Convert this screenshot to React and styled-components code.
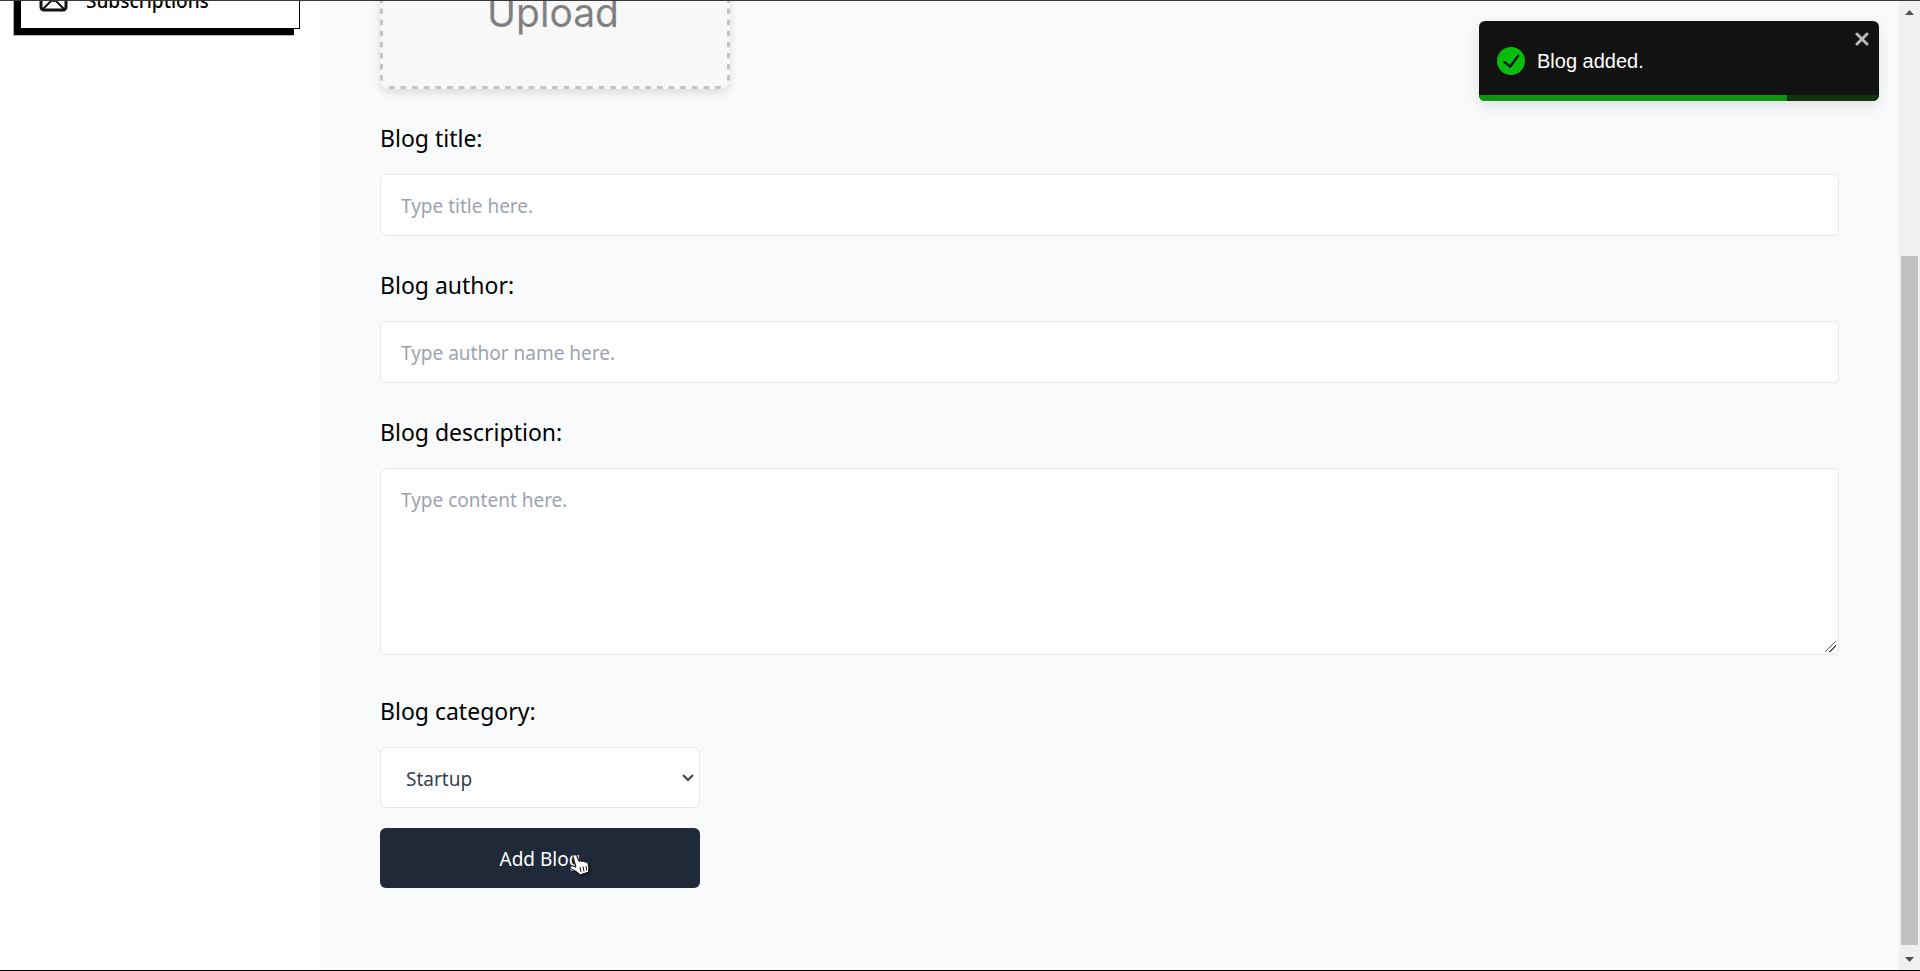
import React from "react";
import styled, { createGlobalStyle } from "styled-components";

const GlobalStyle = createGlobalStyle`
  *, *::before, *::after { box-sizing: border-box; }
  body {
    margin: 0;
    color: #000;
    font-family: "Segoe UI", "Noto Sans", "Open Sans", sans-serif;
  }
  button, input, select, textarea { font: inherit; }
`;

const Frame = styled.div`
  display: flex;
  height: 100vh;
  overflow: hidden;
  border-top: 1px solid #39373b;
  border-bottom: 1px solid #000;
  background: #f8fafc;
`;

const Sidebar = styled.nav`
  flex: 0 0 320px;
  padding: 0 20px;
  background: #fff;
`;

const NavLink = styled.a`
  display: flex;
  align-items: center;
  gap: 18px;
  height: 57px;
  margin-top: -29px;
  padding: 0 17px;
  border: 1px solid #000;
  background: #fff;
  box-shadow: -6px 6px 0 #000, -7px 7px 0 #b4b4b4;
  color: #000;
  font-size: 19px;
  font-weight: 500;
  text-decoration: none;
`;

const Main = styled.main`
  flex: 1;
  min-width: 0;
  padding: 0 60px;
`;

const Form = styled.form`
  display: flex;
  flex-direction: column;
  align-items: flex-start;
`;

const dash = "#c4c4c4 25%, transparent 25% 75%, #c4c4c4 75%";

const UploadArea = styled.label`
  display: flex;
  align-items: flex-end;
  justify-content: center;
  width: 350px;
  height: 200px;
  margin-top: -112px;
  padding: 0 4px 52px 0;
  border-radius: 9px;
  background:
    linear-gradient(90deg, ${dash}) left bottom / calc(100% / 30) 3px repeat-x,
    linear-gradient(${dash}) left bottom / 3px calc(100% / 18) repeat-y,
    linear-gradient(${dash}) right bottom / 3px calc(100% / 18) repeat-y,
    #f8f8f8;
  box-shadow: 0 4px 8px rgba(0, 0, 0, 0.12);
  color: #808080;
  font-family: Inter, sans-serif;
  font-size: 39px;
  line-height: 48px;
`;

const FileInput = styled.input`
  display: none;
`;

const Field = styled.div`
  width: ${(p) => (p.$narrow ? "320px" : "100%")};
  margin-top: ${(p) => (p.$narrow ? "39px" : "32px")};
`;

const Label = styled.label`
  display: block;
  margin-bottom: 18px;
  font-size: 23px;
  line-height: 35px;
`;

const Input = styled.input`
  display: block;
  width: 100%;
  height: 62px;
  padding: 2px 20px 0;
  border: 1px solid #e5e7eb;
  border-radius: 6px;
  background: #fff;
  font-size: 19px;
  &::placeholder { color: #9ca3af; }
`;

const TextArea = styled.textarea`
  display: block;
  width: 100%;
  height: 187px;
  padding: 16px 20px;
  border: 1px solid #e5e7eb;
  border-radius: 6px;
  background: #fff;
  font-size: 19px;
  line-height: 30px;
  resize: vertical;
  &::placeholder { color: #9ca3af; }
  &::-webkit-resizer {
    background: linear-gradient(135deg, transparent 46%, #55555a 46% 53%, transparent 53% 66%, #55555a 66% 73%, transparent 73%)
      2px 2px / 11px 11px no-repeat;
  }
`;

const SelectWrap = styled.div`
  position: relative;
`;

const Select = styled.select`
  display: block;
  appearance: none;
  width: 100%;
  height: 61px;
  padding: 2px 25px 0;
  border: 1px solid #e5e7eb;
  border-radius: 6px;
  background: #fff;
  color: #374151;
  font-size: 19px;
`;

const Chevron = styled.svg`
  position: absolute;
  top: 26px;
  right: 6px;
  pointer-events: none;
`;

const SubmitButton = styled.button`
  position: relative;
  width: 320px;
  height: 60px;
  margin-top: 20px;
  padding: 2px 0 0;
  border: 0;
  border-radius: 6px;
  background: #1f2937;
  color: #fff;
  font-size: 19px;
  cursor: pointer;
`;

const Pointer = styled.svg`
  position: absolute;
  top: 26px;
  left: 189px;
  filter: drop-shadow(1px 1px 1px rgba(0, 0, 0, 0.6));
`;

const Scrollbar = styled.div`
  display: flex;
  flex: 0 0 21px;
  flex-direction: column;
  align-items: center;
  background: #f0f0f0;
`;

const Arrow = styled.svg`
  flex: 0 0 25px;
`;

const Track = styled.div`
  display: flex;
  flex: 1;
  flex-direction: column;
  justify-content: flex-end;
  width: 17px;
`;

const Thumb = styled.div`
  height: 75%;
  background: #c1c1c1;
`;

const Toast = styled.div`
  position: fixed;
  top: 21px;
  right: 41px;
  width: 400px;
  border-radius: 6px;
  box-shadow: 0 5px 15px rgba(0, 0, 0, 0.1);
`;

const ToastBody = styled.div`
  position: relative;
  display: flex;
  align-items: center;
  gap: 12px;
  height: 80px;
  padding: 0 18px;
  overflow: hidden;
  border-radius: 6px;
  background: #121212;
  color: #fff;
  font-family: "Liberation Sans", Arial, sans-serif;
  font-size: 20px;
`;

const CloseButton = styled.button`
  position: absolute;
  top: 11px;
  right: 10px;
  display: flex;
  padding: 0;
  border: 0;
  background: transparent;
  color: #b8b8b8;
`;

const Progress = styled.div`
  position: absolute;
  right: 0;
  bottom: 0;
  left: 0;
  height: 6px;
  background: #103510;
`;

const ProgressFill = styled.div`
  height: 100%;
  background: #0b960f;
`;

export default function App() {
  const remaining = 77;
  return (
    <>
      <GlobalStyle />
      <Frame>
        <Sidebar>
          <NavLink href="#subscriptions">
            <svg width="30" height="24" viewBox="0 0 30 24" fill="none" stroke="#111" strokeWidth="3" strokeLinejoin="round">
              <rect x="3" y="1" width="25" height="20" rx="3" />
              <path d="M5 4l8 7q2.500 2 5 0l8-7M5 20l8-8M26 20l-8-8" strokeWidth="2" />
            </svg>
            Subscriptions
          </NavLink>
        </Sidebar>
        <Main>
          <Form onSubmit={(e) => e.preventDefault()}>
            <UploadArea>
              Upload
              <FileInput type="file" />
            </UploadArea>
            <Field>
              <Label htmlFor="title">Blog title:</Label>
              <Input id="title" type="text" placeholder="Type title here." />
            </Field>
            <Field>
              <Label htmlFor="author">Blog author:</Label>
              <Input id="author" type="text" placeholder="Type author name here." />
            </Field>
            <Field>
              <Label htmlFor="description">Blog description:</Label>
              <TextArea id="description" placeholder="Type content here." />
            </Field>
            <Field $narrow>
              <Label htmlFor="category">Blog category:</Label>
              <SelectWrap>
                <Select id="category" defaultValue="Startup">
                  <option>Startup</option>
                  <option>Technology</option>
                  <option>Lifestyle</option>
                </Select>
                <Chevron width="12" height="10" viewBox="0 0 12 10" fill="none" stroke="#374151" strokeWidth="2">
                  <path d="M1 2l5 5 5-5" />
                </Chevron>
              </SelectWrap>
            </Field>
            <SubmitButton type="submit">
              Add Blog
              <Pointer width="21" height="22" viewBox="0 0 21 22" aria-hidden="true">
                <path
                  d="M4 2.500C4 .5 7 .2 7.800 2.200L10 7.500c1-1 2.500-.8 3 .2 1-.8 2.500-.5 3 .5 1.200-.5 2.600.2 3 1.500l.8 4c.3 2-.5 3-.5 4.500l-8.300 2.600c-2-2.800-5-4-8.500-5.800-2-1.200-1-3.500 1.200-3L7 13z"
                  fill="#fff" stroke="#111" strokeWidth="1"
                />
                <path d="M11 13l1 5M14 12.500l1 5M17 12l.6 4.500" stroke="#111" fill="none" />
              </Pointer>
            </SubmitButton>
          </Form>
        </Main>
        <Scrollbar aria-hidden="true">
          <Arrow width="9" height="25" viewBox="0 0 9 25"><path d="M0 14l4.500-5L9 14z" fill="#505050" /></Arrow>
          <Track><Thumb /></Track>
          <Arrow width="9" height="25" viewBox="0 0 9 25"><path d="M0 12l4.500 5L9 12z" fill="#505050" /></Arrow>
        </Scrollbar>
      </Frame>
      <Toast role="alert">
        <ToastBody>
          <svg width="28" height="28" viewBox="0 0 24 24" fill="#07bc0c">
            <path d="M12 0a12 12 0 1012 12A12.014 12.014 0 0012 0zm6.927 8.200l-6.845 9.289a1.011 1.011 0 01-1.430.188l-4.888-3.908a1 1 0 111.250-1.562l4.076 3.261 6.227-8.451a1 1 0 111.610 1.183z" />
          </svg>
          Blog added.
          <CloseButton type="button" aria-label="close">
            <svg width="14" height="14" viewBox="0 0 14 14" fill="none" stroke="currentColor" strokeWidth="3" strokeLinecap="round">
              <path d="M2 2l10 10M12 2L2 12" />
            </svg>
          </CloseButton>
          <Progress><ProgressFill style={{ width: `${remaining}%` }} /></Progress>
        </ToastBody>
      </Toast>
    </>
  );
}
